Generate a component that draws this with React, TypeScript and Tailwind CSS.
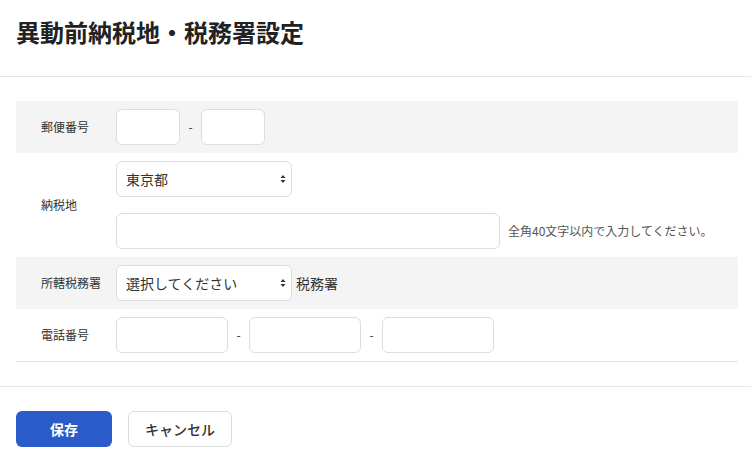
import React from "react";

const font = { fontFamily: '"Noto Sans CJK JP", "Noto Sans", sans-serif' };

function Arrows() {
  return (
    <svg width="6" height="10" viewBox="0 0 6 10" className="pointer-events-none absolute right-[6px] top-1/2 -translate-y-1/2">
      <path d="M3 1 L5.5 4 L0.5 4 Z" fill="#333" />
      <path d="M3 9 L5.5 6 L0.5 6 Z" fill="#333" />
    </svg>
  );
}

function Select({ value }: { value: string }) {
  return (
    <div className="relative w-[176px] h-[36px]">
      <select
        defaultValue={value}
        className="appearance-none w-full h-full bg-white border border-[#dddddd] rounded-[6px] pl-[9px] pr-6 text-[14px] text-[#333] outline-none"
        style={font}
      >
        <option>{value}</option>
      </select>
      <Arrows />
    </div>
  );
}

function Input({ w }: { w: string }) {
  return <input type="text" className={`${w} h-[36px] bg-white border border-[#dddddd] rounded-[6px] outline-none`} />;
}

function Dash() {
  return <span className="w-[21px] text-center text-[12px] text-[#333]">-</span>;
}

export default function App() {
  return (
    <div className="w-[751px] bg-white text-[#333]" style={font}>
      <div className="h-[77px] border-b border-[#e5e5e5] pl-4 pt-[16px]">
        <h1 className="text-[24px] leading-[32px] font-bold text-[#222]">異動前納税地・税務署設定</h1>
      </div>
      <div className="ml-4 mr-[13px] mt-[24px] border-b border-[#e5e5e5]">
        <div className="flex items-center bg-[#f5f4f4] py-2">
          <div className="w-[100px] pl-[25px] text-[12px]">郵便番号</div>
          <div className="flex items-center">
            <Input w="w-[64px]" />
            <Dash />
            <Input w="w-[64px]" />
          </div>
        </div>
        <div className="flex items-center py-2">
          <div className="w-[100px] pl-[25px] text-[12px]">納税地</div>
          <div className="flex flex-col gap-4">
            <Select value="東京都" />
            <div className="flex items-center">
              <Input w="w-[384px]" />
              <span className="ml-2 text-[12px] text-[#555]">全角40文字以内で入力してください。</span>
            </div>
          </div>
        </div>
        <div className="flex items-center bg-[#f5f4f4] py-2">
          <div className="w-[100px] pl-[25px] text-[12px]">所轄税務署</div>
          <div className="flex items-center">
            <Select value="選択してください" />
            <span className="ml-1 text-[14px]">税務署</span>
          </div>
        </div>
        <div className="flex items-center py-2">
          <div className="w-[100px] pl-[25px] text-[12px]">電話番号</div>
          <div className="flex items-center">
            <Input w="w-[112px]" />
            <Dash />
            <Input w="w-[112px]" />
            <Dash />
            <Input w="w-[112px]" />
          </div>
        </div>
      </div>
      <div className="mt-[24px] border-t border-[#e5e5e5] pt-[24px] pl-4 flex gap-4 pb-[10px]">
        <button className="w-[96px] h-[36px] rounded-[6px] bg-[#2a5bc8] text-white text-[14px] font-bold" style={font}>保存</button>
        <button className="w-[104px] h-[36px] rounded-[6px] bg-white border border-[#dddddd] text-[14px] font-medium text-[#333]" style={font}>キャンセル</button>
      </div>
    </div>
  );
}
